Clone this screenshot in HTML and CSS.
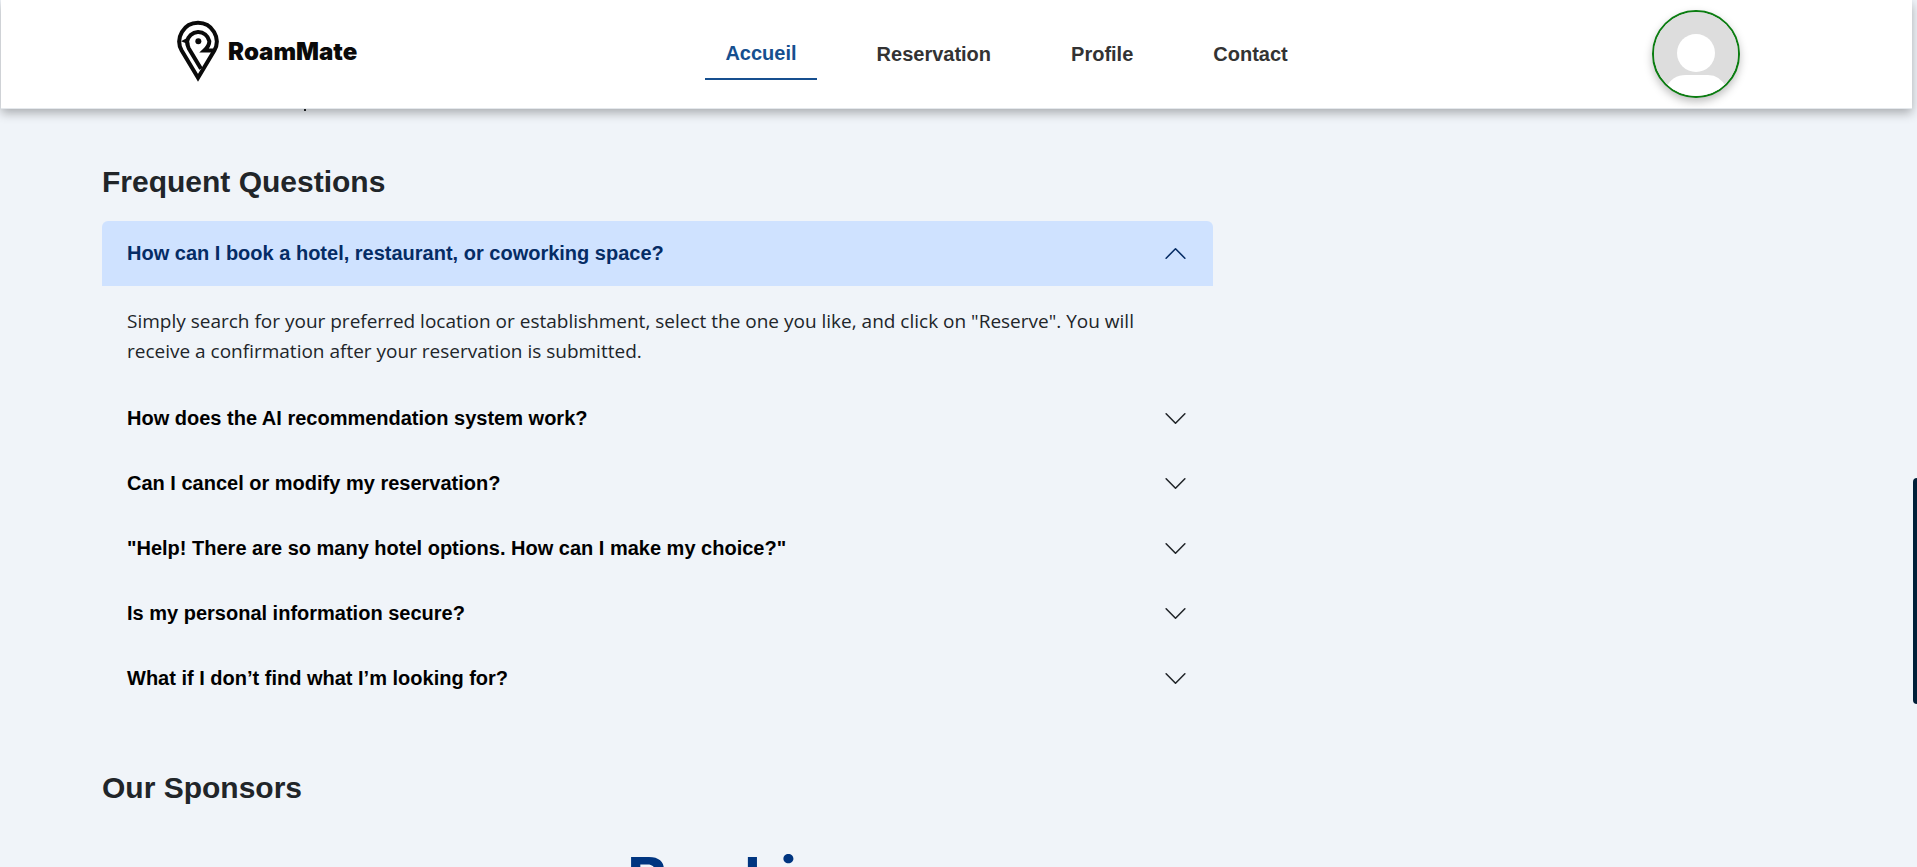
FILE: index.html
```html
<!DOCTYPE html>
<html lang="en">
<head>
<meta charset="utf-8">
<title>RoamMate</title>
<link rel="stylesheet" href="styles.css">
</head>
<body>
<header class="navbar">
  <a class="brand" href="#">
    <svg class="brand-pin" viewBox="52 62 126 188" aria-hidden="true">
      <g fill="none" stroke="#0a0a0a" stroke-width="12">
        <path d="M115 235 L66 153 A56 56 0 1 1 164 153 Z"/>
        <path d="M124 208 L87 146 Q82 136 82 127 A34 34 0 0 1 149 125 Q149 139 134 153 H160"/>
      </g>
      <path d="M64 125 L86 113 L90 136 Z" fill="#0a0a0a"/>
      <circle cx="116" cy="125" r="9" fill="#0a0a0a"/>
    </svg>
    <span class="brand-name">RoamMate</span>
  </a>
  <nav class="menu" aria-label="Main">
    <a class="menu-link active" href="#">Accueil</a>
    <a class="menu-link" href="#">Reservation</a>
    <a class="menu-link" href="#">Profile</a>
    <a class="menu-link" href="#">Contact</a>
  </nav>
  <button class="avatar" type="button" aria-label="Account">
    <svg viewBox="0 0 84 84" aria-hidden="true">
      <rect width="84" height="84" fill="#ddd"/>
      <circle cx="42" cy="41" r="19" fill="#fff"/>
      <path d="M12 76 Q18 63 32 63 H54 Q66 63 73 76 V84 H12 Z" fill="#fff"/>
    </svg>
  </button>
</header>
<main class="page">
  <div class="text-tail"></div>
  <section class="faq">
    <h2 class="title">Frequent Questions</h2>
    <div class="accordion">
      <h3 class="item"><button class="question open" type="button" aria-expanded="true" aria-controls="answer-1">How can I book a hotel, restaurant, or coworking space?<svg class="chevron" viewBox="0 0 16 16" aria-hidden="true"><path d="m2 5 6 6 6-6"/></svg></button></h3>
      <p class="answer" id="answer-1">Simply search for your preferred location or establishment, select the one you like, and click on "Reserve". You will receive a confirmation after your reservation is submitted.</p>
      <h3 class="item"><button class="question" type="button" aria-expanded="false">How does the AI recommendation system work?<svg class="chevron" viewBox="0 0 16 16" aria-hidden="true"><path d="m2 5 6 6 6-6"/></svg></button></h3>
      <h3 class="item"><button class="question" type="button" aria-expanded="false">Can I cancel or modify my reservation?<svg class="chevron" viewBox="0 0 16 16" aria-hidden="true"><path d="m2 5 6 6 6-6"/></svg></button></h3>
      <h3 class="item"><button class="question" type="button" aria-expanded="false">"Help! There are so many hotel options. How can I make my choice?"<svg class="chevron" viewBox="0 0 16 16" aria-hidden="true"><path d="m2 5 6 6 6-6"/></svg></button></h3>
      <h3 class="item"><button class="question" type="button" aria-expanded="false">Is my personal information secure?<svg class="chevron" viewBox="0 0 16 16" aria-hidden="true"><path d="m2 5 6 6 6-6"/></svg></button></h3>
      <h3 class="item"><button class="question" type="button" aria-expanded="false">What if I don’t find what I’m looking for?<svg class="chevron" viewBox="0 0 16 16" aria-hidden="true"><path d="m2 5 6 6 6-6"/></svg></button></h3>
    </div>
  </section>
  <section class="sponsors">
    <h2 class="title">Our Sponsors</h2>
    <div class="sponsor-row"><span class="sponsor">Booki</span></div>
  </section>
</main>
<aside class="side-tab" aria-label="Side panel"></aside>
</body>
</html>
```
FILE: styles.css
```css
* {
  box-sizing: border-box;
}

body {
  margin: 0;
  height: 100vh;
  overflow: hidden;
  background: #f0f4f9;
  color: #212529;
  font-family: "Liberation Sans", Arial, sans-serif;
}

.navbar {
  position: relative;
  z-index: 2;
  display: flex;
  align-items: center;
  justify-content: space-around;
  height: 109px;
  margin: 0 5px 0 1px;
  background: #fff;
  border-bottom: 1px solid #e4e8ec;
  box-shadow: 0 4px 10px rgba(0, 0, 0, 0.3);
}

.brand {
  display: flex;
  align-items: center;
  gap: 9px;
  padding: 0 4px 5px;
  color: #0a0a0a;
  text-decoration: none;
}

.brand-pin {
  width: 42px;
  height: 63px;
}

.brand-name {
  font: 900 24px/28px Inter, sans-serif;
}

.menu {
  display: flex;
  align-items: center;
  gap: 40px;
}

.menu-link {
  padding: 10px 20px;
  color: #333;
  font-size: 20px;
  font-weight: bold;
  line-height: 30px;
  text-decoration: none;
}

.menu-link.active {
  color: #164f8f;
  border-bottom: 2px solid #164f8f;
}

.avatar {
  width: 88px;
  height: 88px;
  padding: 0;
  overflow: hidden;
  background: #ddd;
  border: 2px solid #0a7d10;
  border-radius: 50%;
  box-shadow: 0 4px 8px rgba(0, 0, 0, 0.25);
}

.avatar svg {
  display: block;
}

.page {
  padding: 0 102px;
}

.text-tail {
  width: 2px;
  height: 2px;
  margin-left: 202px;
  background: #212529;
}

.faq {
  max-width: 1111px;
  padding-top: 54px;
}

.title {
  margin: 0 0 22px;
  font-size: 30px;
  font-weight: bold;
  line-height: 34px;
}

.item {
  margin: 0;
}

.question {
  display: flex;
  align-items: center;
  justify-content: space-between;
  width: 100%;
  padding: 20px 25px;
  background: transparent;
  border: 0;
  color: #000;
  font: bold 20px/25px "Liberation Sans", Arial, sans-serif;
  text-align: left;
}

.question.open {
  background: #cfe2ff;
  border-radius: 6px 6px 0 0;
  color: #052c65;
}

.chevron {
  width: 25px;
  height: 25px;
  fill: none;
  stroke: #212529;
  stroke-linecap: round;
  stroke-linejoin: round;
}

.open .chevron {
  stroke: #052c65;
  transform: rotate(180deg);
}

.answer {
  margin: 0;
  padding: 20px 25px;
  font: 19px/30px "Open Sans", "Noto Sans", sans-serif;
}

.sponsors {
  padding-top: 60px;
}

.sponsor-row {
  padding: 13px 0 0 525px;
}

.sponsor {
  color: #003580;
  font: bold 62px/80px Inter, sans-serif;
}

.side-tab {
  position: fixed;
  top: 478px;
  right: 0;
  width: 4px;
  height: 226px;
  background: #001f38;
  border-radius: 4px 0 0 4px;
}
```
